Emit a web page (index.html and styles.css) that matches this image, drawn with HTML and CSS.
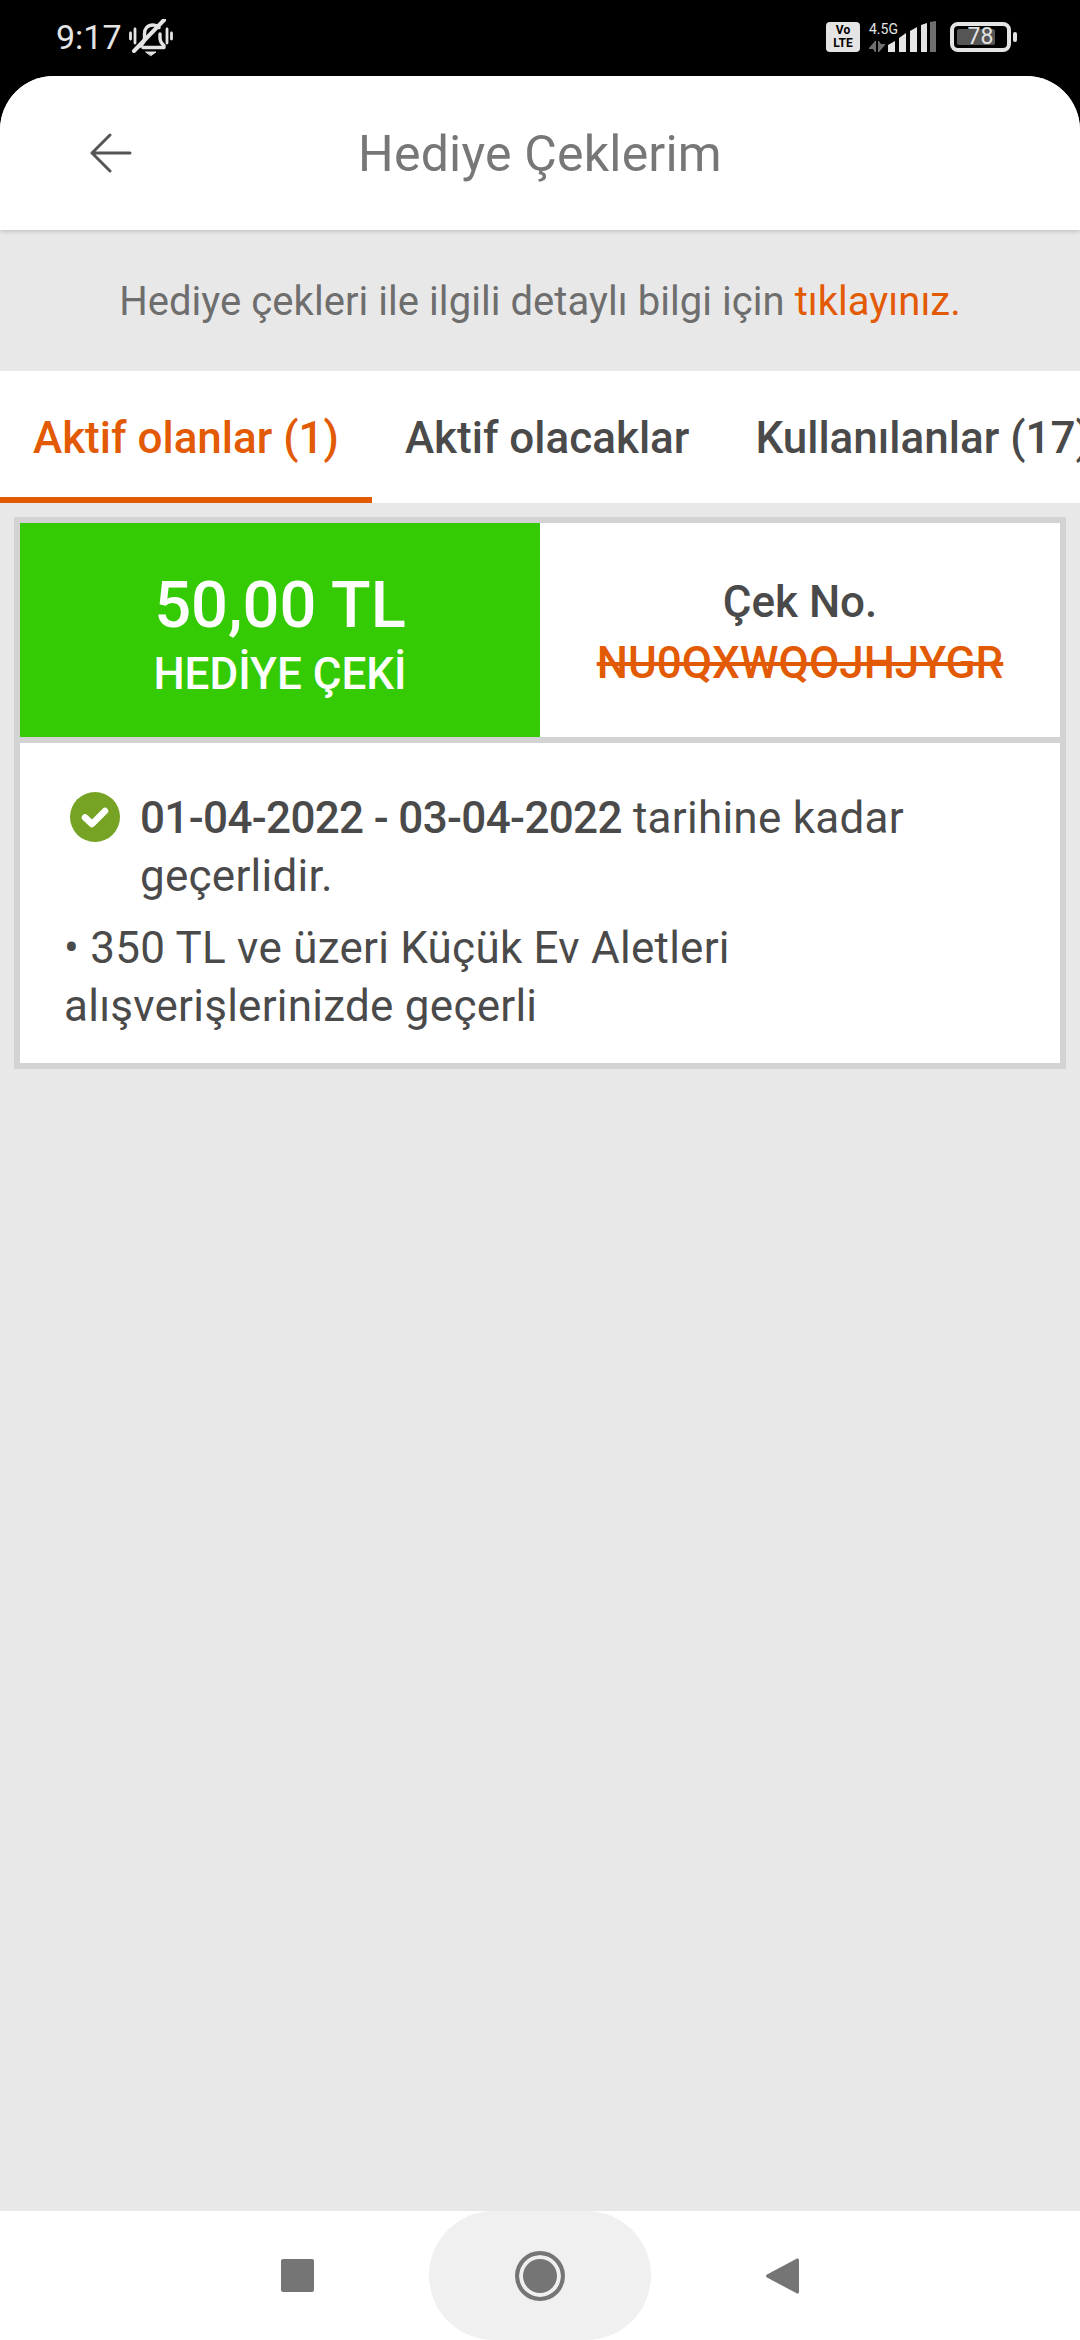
FILE: index.html
```html
<!DOCTYPE html>
<html lang="tr">
<head>
    <meta charset="UTF-8">
    <meta name="viewport" content="width=device-width, initial-scale=1.0">
    <title>Hediye Çeklerim</title>
    <link rel="stylesheet" href="styles.css">
</head>
<body>

    <div class="status-bar">
        <span class="status-time">9:17</span>
        <svg class="status-bell" width="44" height="38" viewBox="0 0 44 38" fill="none" stroke="#e4e4e4" stroke-linecap="round" stroke-linejoin="round">
            <path d="M1.5 14v6M6 10v14M38 10v14M42.5 14v6" stroke-width="2.8"/>
            <path d="M11 27c3-2 4.500-4.500 4.500-8v-4c0-5.500 3-9 8.500-9 2.500 0 4.500 1 6 2.500M31 15v4c0 3 1.500 5.500 4 7.500v2H14" stroke-width="3.400"/>
            <path d="M5 32 35 1" stroke-width="4"/>
            <path d="M17 33h10l-5 3.500z" fill="#e4e4e4" stroke-width="1"/>
        </svg>
        <span class="status-spacer"></span>
        <span class="volte">Vo<br>LTE</span>
        <div class="network">
            <span class="network-label">4.5G</span>
            <svg width="16" height="11" viewBox="0 0 16 11" fill="#6f6f6f">
                <path d="M0 7 6 0h1v11H6L4 8H0zM9 0h1l2 3h4v1l-6 7H9z"/>
            </svg>
        </div>
        <svg class="signal" width="48" height="31" viewBox="0 0 48 31">
            <path fill="#e4e4e4" d="M0 24l7-4v11H0zM11 17l7-5v19h-7zM22 10l7-4v25h-7zM33 4l6-2v29h-6z"/>
            <path fill="#6f6f6f" d="M42 1l6-1v31h-6z"/>
        </svg>
        <div class="battery">
            <div class="battery-body">
                <div class="battery-fill"></div>
                <span class="battery-text">78</span>
            </div>
            <span class="battery-nub"></span>
        </div>
    </div>

    <div class="screen">
        <header class="top-bar">
            <svg class="back-icon" width="44" height="40" viewBox="0 0 44 40" fill="none" stroke="#555" stroke-width="3" stroke-linecap="round" stroke-linejoin="round">
                <path d="M41 20H4M21 2 3 20l18 18"/>
            </svg>
            <h1 class="page-title">Hediye Çeklerim</h1>
        </header>

        <p class="info-line">Hediye çekleri ile ilgili detaylı bilgi için <a href="#" class="info-link">tıklayınız.</a></p>

        <nav class="tabs">
            <a href="#" class="tab tab-active">Aktif olanlar (1)</a>
            <a href="#" class="tab">Aktif olacaklar</a>
            <a href="#" class="tab">Kullanılanlar (17)</a>
        </nav>

        <main class="content">
            <section class="voucher">
                <div class="voucher-top">
                    <div class="voucher-amount">
                        <span class="amount-value">50,00 TL</span>
                        <span class="amount-label">HEDİYE ÇEKİ</span>
                    </div>
                    <div class="voucher-code">
                        <span class="code-label">Çek No.</span>
                        <span class="code-value">NU0QXWQOJHJYGR</span>
                    </div>
                </div>
                <div class="voucher-body">
                    <div class="validity">
                        <svg class="check-icon" width="50" height="50" viewBox="0 0 50 50">
                            <circle cx="25" cy="25" r="25" fill="#76a323"/>
                            <path d="M15 25.500l7 6.500 13-13" fill="none" stroke="#fff" stroke-width="6.500" stroke-linecap="round" stroke-linejoin="round"/>
                        </svg>
                        <p class="validity-text"><strong>01-04-2022 - 03-04-2022</strong> tarihine kadar geçerlidir.</p>
                    </div>
                    <p class="voucher-note">• 350 TL ve üzeri Küçük Ev Aletleri alışverişlerinizde geçerli</p>
                </div>
            </section>
        </main>

        <footer class="nav-bar">
            <span class="nav-square"></span>
            <div class="nav-home">
                <span class="nav-circle"></span>
            </div>
            <svg class="nav-back" width="34" height="38" viewBox="0 0 34 38">
                <path d="M32 1.500 2 17.500q-2 1.500 0 3l30 16q2 .5 2-1.500V3q0-2-2-1.500z" fill="#757575"/>
            </svg>
        </footer>
    </div>

</body>
</html>
```

FILE: styles.css
```css
* {
    box-sizing: border-box;
}

html, body {
    margin: 0;
    padding: 0;
}

body {
    width: 1080px;
    height: 2340px;
    overflow: hidden;
    background-color: #000;
    font-family: 'Roboto', sans-serif;
    color: #4a4a4a;
}

a {
    text-decoration: none;
}

/* status bar */
.status-bar {
    height: 76px;
    display: flex;
    align-items: center;
    padding: 0 63px 0 56px;
    color: #e4e4e4;
}

.status-time {
    font-size: 34px;
    line-height: 76px;
    margin-top: -2px;
}

.status-bell {
    margin-left: 7px;
    margin-top: -1px;
}

.status-spacer {
    flex: 1;
}

.volte {
    width: 34px;
    height: 30px;
    border-radius: 4px;
    background-color: #e4e4e4;
    color: #000;
    font-size: 12px;
    font-weight: 700;
    line-height: 13px;
    text-align: center;
    padding-top: 2px;
    margin-top: -3px;
}

.network {
    width: 19px;
    margin-left: 9px;
    display: flex;
    flex-direction: column;
    gap: 4px;
    margin-top: -3px;
    white-space: nowrap;
}

.network-label {
    font-size: 14px;
    line-height: 15px;
}

.signal {
    margin-top: -3px;
}

.battery {
    display: flex;
    align-items: center;
    gap: 2px;
    margin-left: 14px;
    margin-top: -3px;
}

.battery-body {
    position: relative;
    width: 61px;
    height: 30px;
    border: 4px solid #e4e4e4;
    border-radius: 8px;
    padding: 3px;
}

.battery-fill {
    width: 38px;
    height: 100%;
    border-radius: 2px;
    background-color: #555;
}

.battery-text {
    position: absolute;
    top: 0;
    left: 0;
    right: 0;
    text-align: center;
    font-size: 23px;
    line-height: 22px;
    color: #e4e4e4;
}

.battery-nub {
    width: 4px;
    height: 10px;
    border-radius: 2px;
    background-color: #e4e4e4;
}

/* app screen */
.screen {
    height: 2264px;
    display: flex;
    flex-direction: column;
    background-color: #e8e8e8;
    border-radius: 54px 54px 0 0;
    overflow: hidden;
}

.top-bar {
    position: relative;
    height: 154px;
    flex-shrink: 0;
    display: flex;
    align-items: center;
    justify-content: center;
    background-color: #fff;
    box-shadow: 0 1px 5px rgba(0, 0, 0, 0.2);
}

.back-icon {
    position: absolute;
    left: 89px;
    top: 57px;
}

.page-title {
    margin: 2px 0 0;
    font-size: 50px;
    font-weight: 400;
    letter-spacing: 0.2px;
    color: #777;
}

.info-line {
    height: 141px;
    margin: 0;
    flex-shrink: 0;
    font-size: 40px;
    line-height: 143px;
    letter-spacing: 0.05px;
    text-align: center;
    color: #6e6e6e;
}

.info-link {
    color: #e35a05;
}

.tabs {
    height: 132px;
    flex-shrink: 0;
    display: flex;
    overflow: hidden;
    white-space: nowrap;
    background-color: #fff;
}

.tab {
    height: 132px;
    padding: 0 33px;
    font-size: 44px;
    font-weight: 500;
    line-height: 135px;
    color: #4a4a4a;
}

.tab-active {
    color: #e35a05;
    border-bottom: 6px solid #e35a05;
}

.content {
    flex: 1;
    padding: 14px 14px 0;
}

/* voucher card */
.voucher {
    border: 6px solid #d3d3d3;
    background-color: #fff;
}

.voucher-top {
    height: 220px;
    display: flex;
    border-bottom: 6px solid #d3d3d3;
}

.voucher-amount {
    width: 520px;
    display: flex;
    flex-direction: column;
    align-items: center;
    justify-content: center;
    padding-top: 7px;
    background-color: #35cb04;
    color: #fff;
}

.amount-value {
    font-size: 65px;
    font-weight: 500;
    line-height: 78px;
    margin-top: -2px;
}

.amount-label {
    font-size: 44px;
    font-weight: 500;
    line-height: 52px;
    margin-top: 4px;
}

.voucher-code {
    flex: 1;
    display: flex;
    flex-direction: column;
    align-items: center;
    justify-content: center;
    gap: 9px;
    padding-top: 5px;
}

.code-label {
    font-size: 44px;
    font-weight: 500;
    line-height: 52px;
}

.code-value {
    font-size: 44px;
    font-weight: 500;
    line-height: 52px;
    color: #e35a05;
    text-decoration: line-through;
}

.voucher-body {
    padding: 46px 40px 28px 44px;
    font-size: 44px;
    line-height: 58px;
    letter-spacing: 0.25px;
}

.validity {
    display: flex;
    align-items: flex-start;
    gap: 20px;
    padding-left: 6px;
}

.check-icon {
    flex-shrink: 0;
    margin-top: 3px;
}

.validity-text {
    margin: 0;
}

.validity-text strong {
    font-weight: 500;
    letter-spacing: -0.65px;
}

.voucher-note {
    margin: 14px 0 0;
}

/* android nav bar */
.nav-bar {
    height: 129px;
    flex-shrink: 0;
    display: flex;
    align-items: center;
    justify-content: center;
    background-color: #fff;
}

.nav-square {
    width: 33px;
    height: 33px;
    border-radius: 2px;
    background-color: #757575;
}

.nav-home {
    width: 222px;
    height: 129px;
    margin: 0 114px 0 115px;
    display: flex;
    align-items: center;
    justify-content: center;
    border-radius: 65px;
    background-color: #f0f0f0;
}

.nav-circle {
    width: 50px;
    height: 50px;
    border-radius: 50%;
    background-color: #757575;
    border: 4px solid #757575;
    box-shadow: inset 0 0 0 4px #f0f0f0;
}

.nav-back {
    flex-shrink: 0;
}
```
